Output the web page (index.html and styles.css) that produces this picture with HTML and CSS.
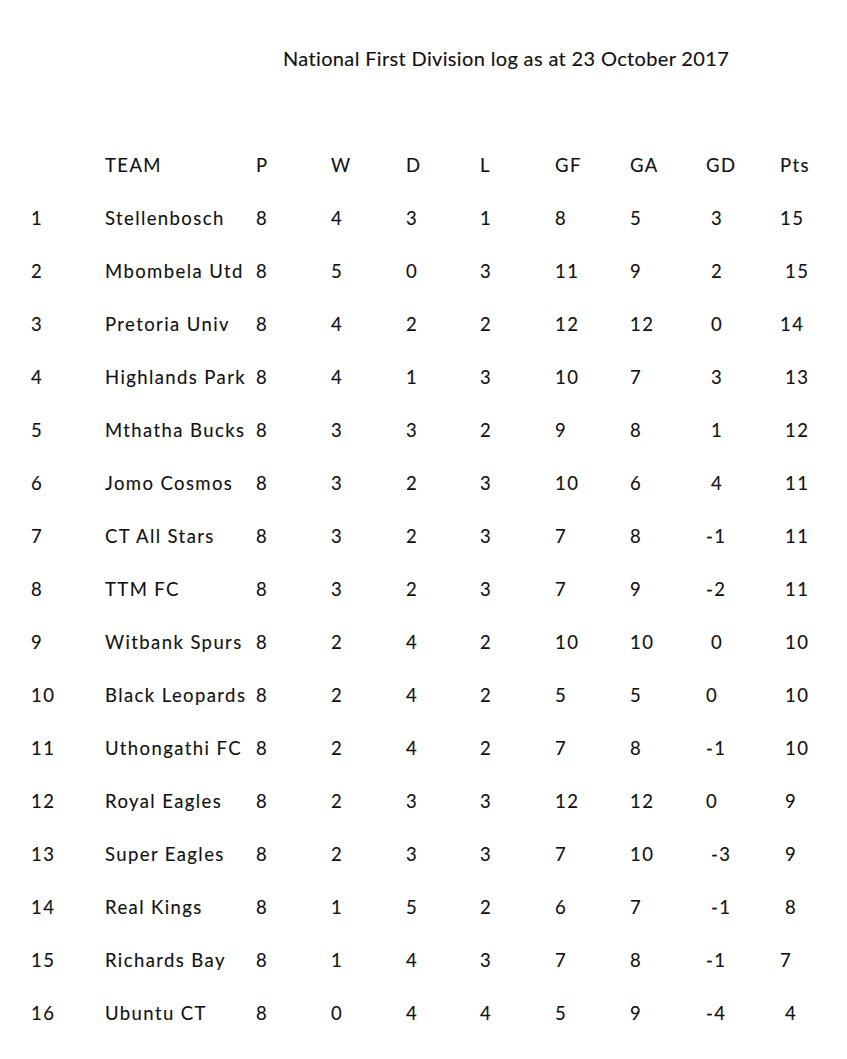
FILE: index.html
```html
<!DOCTYPE html>
<html lang="en">
<head>
<meta charset="utf-8">
<title>National First Division log</title>
<link rel="stylesheet" href="styles.css">
</head>
<body>
<div class="page">
  <h1 class="title">National First Division log as at 23 October 2017</h1>
  <div class="log">
    <div class="row head"><span></span><span>TEAM</span><span>P</span><span>W</span><span>D</span><span>L</span><span>GF</span><span>GA</span><span>GD</span><span>Pts</span></div>
    <div class="row"><span>1</span><span>Stellenbosch</span><span>8</span><span>4</span><span>3</span><span>1</span><span>8</span><span>5</span><span class="s">3</span><span>15</span></div>
    <div class="row"><span>2</span><span>Mbombela Utd</span><span>8</span><span>5</span><span>0</span><span>3</span><span>11</span><span>9</span><span class="s">2</span><span class="s">15</span></div>
    <div class="row"><span>3</span><span>Pretoria Univ</span><span>8</span><span>4</span><span>2</span><span>2</span><span>12</span><span>12</span><span class="s">0</span><span>14</span></div>
    <div class="row"><span>4</span><span>Highlands Park</span><span>8</span><span>4</span><span>1</span><span>3</span><span>10</span><span>7</span><span class="s">3</span><span class="s">13</span></div>
    <div class="row"><span>5</span><span>Mthatha Bucks</span><span>8</span><span>3</span><span>3</span><span>2</span><span>9</span><span>8</span><span class="s">1</span><span class="s">12</span></div>
    <div class="row"><span>6</span><span>Jomo Cosmos</span><span>8</span><span>3</span><span>2</span><span>3</span><span>10</span><span>6</span><span class="s">4</span><span class="s">11</span></div>
    <div class="row"><span>7</span><span>CT All Stars</span><span>8</span><span>3</span><span>2</span><span>3</span><span>7</span><span>8</span><span>-1</span><span class="s">11</span></div>
    <div class="row"><span>8</span><span>TTM FC</span><span>8</span><span>3</span><span>2</span><span>3</span><span>7</span><span>9</span><span>-2</span><span class="s">11</span></div>
    <div class="row"><span>9</span><span>Witbank Spurs</span><span>8</span><span>2</span><span>4</span><span>2</span><span>10</span><span>10</span><span class="s">0</span><span class="s">10</span></div>
    <div class="row"><span>10</span><span>Black Leopards</span><span>8</span><span>2</span><span>4</span><span>2</span><span>5</span><span>5</span><span>0</span><span class="s">10</span></div>
    <div class="row"><span>11</span><span>Uthongathi FC</span><span>8</span><span>2</span><span>4</span><span>2</span><span>7</span><span>8</span><span>-1</span><span class="s">10</span></div>
    <div class="row"><span>12</span><span>Royal Eagles</span><span>8</span><span>2</span><span>3</span><span>3</span><span>12</span><span>12</span><span>0</span><span class="s">9</span></div>
    <div class="row"><span>13</span><span>Super Eagles</span><span>8</span><span>2</span><span>3</span><span>3</span><span>7</span><span>10</span><span class="s">-3</span><span class="s">9</span></div>
    <div class="row"><span>14</span><span>Real Kings</span><span>8</span><span>1</span><span>5</span><span>2</span><span>6</span><span>7</span><span class="s">-1</span><span class="s">8</span></div>
    <div class="row"><span>15</span><span>Richards Bay</span><span>8</span><span>1</span><span>4</span><span>3</span><span>7</span><span>8</span><span>-1</span><span>7</span></div>
    <div class="row"><span>16</span><span>Ubuntu CT</span><span>8</span><span>0</span><span>4</span><span>4</span><span>5</span><span>9</span><span>-4</span><span class="s">4</span></div>
  </div>
</div>
</body>
</html>
```

FILE: styles.css
```css
html, body {
  margin: 0;
  padding: 0;
  background: #ffffff;
}

body {
  font-family: Lato, "Liberation Sans", sans-serif;
  color: #111111;
  -webkit-text-stroke: 0.12px #111111;
}

.page {
  width: 847px;
  height: 1059px;
  overflow: hidden;
}

.title {
  margin: 0;
  padding: 43px 0 0 283px;
  font-size: 20px;
  font-weight: 400;
  line-height: 30px;
  letter-spacing: 0.35px;
  white-space: nowrap;
}

.log {
  padding: 66px 0 0 31px;
}

.row {
  display: grid;
  grid-template-columns: 74px 151px 75px 75px 74px 75px 75px 76px 74px 1fr;
  height: 53px;
  line-height: 53px;
  font-size: 18.5px;
  letter-spacing: 1.4px;
  white-space: nowrap;
}

.row span.s {
  padding-left: 5px;
}
```
